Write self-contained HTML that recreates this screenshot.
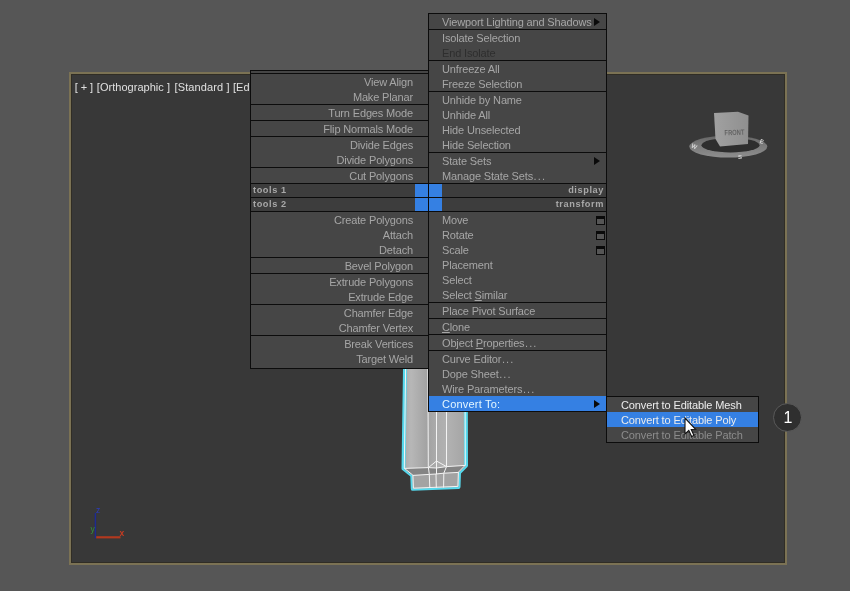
<!DOCTYPE html>
<html><head><meta charset='utf-8'><title>3ds Max quad menu</title><style>
html,body{margin:0;padding:0;}
body{width:850px;height:591px;overflow:hidden;background:#565656;position:relative;font-family:"Liberation Sans",sans-serif;font-size:11px;color:#a6a6a6;}
#vp{position:absolute;left:69px;top:72px;width:714px;height:489px;border:2px solid #7b7254;background:#383838;box-shadow:inset 0 0 0 1px #302d25;}
#vplabel{will-change:transform;position:absolute;left:0;top:0}
#vplabel span{position:absolute;top:80px;color:#e0e0e0;font-size:11px;white-space:pre;line-height:15px;}
.menu{will-change:transform;position:absolute;background:#464646;border:1px solid #0c0c0c;box-sizing:border-box;}
.row{height:15px;line-height:17px;white-space:nowrap;position:relative;letter-spacing:-0.15px}
.sep{height:1px;background:#0c0c0c;}
.hdr{height:13px;line-height:13px;background:#3d3d3d;font-weight:bold;font-size:9.2px;color:#a8a8a8;position:relative;white-space:nowrap;letter-spacing:0.6px}
#lm .row{text-align:right;padding-right:15px;}
#rm .row{padding-left:13px;}
#sm .row{padding-left:14px;color:#ececec;letter-spacing:-0.12px}
#sm .sub3{color:#8c8c8c}
.dis{color:#2e2e2e}
.hl{background:#3580e3;color:#e4f6ff}
i{font-style:normal;letter-spacing:1.1px;margin-left:0.6px}
.arr{position:absolute;right:6px;top:4px;width:0;height:0;border-left:6px solid #0a0a0a;border-top:4.5px solid transparent;border-bottom:4.5px solid transparent}
.box{position:absolute;right:1px;top:4px;width:9px;height:9px;border:1px solid #0a0a0a;border-top-width:3px;box-sizing:border-box;background:#555}
.sq{position:absolute;top:0;width:13px;height:13px;background:#3580e3}
#badge{position:absolute;left:773px;top:403px;width:27px;height:27px;border-radius:50%;background:#2f2f2f;border:1px solid #5a5a5a;color:#fff;font-size:16px;line-height:27px;text-align:center;will-change:transform;text-indent:1px}
u{text-decoration:underline;text-underline-offset:1px}
</style></head><body>
<div id="vp"></div>
<div id="vplabel"><span style="left:74.8px;letter-spacing:2.8px">[+]</span><span style="left:96.8px;letter-spacing:0.03px">[Orthographic ]</span><span style="left:174.5px;letter-spacing:0.12px">[Standard ]</span><span style="left:233px">[Ed</span></div>
<svg id="scene" width="850" height="591" viewBox="0 0 850 591" style="position:absolute;left:0;top:0">
<defs>
<linearGradient id="gbody" x1="0" x2="1" y1="0" y2="0">
<stop offset="0" stop-color="#a9a9a9"/><stop offset="0.12" stop-color="#b7b7b7"/><stop offset="0.38" stop-color="#a2a2a2"/><stop offset="0.55" stop-color="#adadad"/><stop offset="0.7" stop-color="#b2b2b2"/><stop offset="1" stop-color="#a4a4a4"/>
</linearGradient>
<linearGradient id="gcube" x1="0" x2="1" y1="0" y2="0">
<stop offset="0" stop-color="#a1a1a1"/><stop offset="1" stop-color="#8f8f8f"/>
</linearGradient>
<linearGradient id="gring" x1="0" x2="0" y1="0" y2="1"><stop offset="0" stop-color="#666666"/><stop offset="0.5" stop-color="#7c7c7c"/><stop offset="1" stop-color="#8e8e8e"/></linearGradient>
<filter id="soft" x="-10%" y="-10%" width="120%" height="120%"><feGaussianBlur stdDeviation="0.35"/></filter>
</defs>
<!-- object -->
<g stroke-linejoin="round">
<path d="M406,300 L405,369 L403.5,468.5 L412.3,475.5 L412.8,488.8 L458.5,487 L459,472.5 L466,465.5 L465.5,300 Z" fill="url(#gbody)" stroke="#56d8ec" stroke-width="4"/>
<path d="M403.8,468.5 L428.4,467.6 L436.5,468 L446.5,466.6 L466,465.5 L459,472.5 L443.8,473.2 L436,474 L429.3,474.4 L412.3,475.5 Z" fill="#848484"/>
<path d="M412.3,475.5 L412.8,488.8 L458.5,487 L459,472.5 L443.8,473.2 L429.3,474.4 Z" fill="#a3a3a3"/>
<g fill="none" stroke="#f4f4f4" stroke-width="1">
<path d="M406.6,300 L405.6,369 L404.3,468.3 L412.9,475.2 L413.4,488.2 L457.9,486.4 L458.4,472.2 L465.3,465.2 L464.8,300"/>
<path d="M427.6,300 L428.3,467.5"/>
<path d="M436.5,300 L436.5,474"/>
<path d="M446.5,300 L446.5,466.5"/>
<path d="M404.3,468.4 L428.4,467.6 L436.5,461 L446.5,466.6 L465.3,465.4"/>
<path d="M428.4,467.6 L436.5,468 L446.5,466.6"/>
<path d="M412.9,475.4 L429.3,474.4 L436,474 L443.8,473.2 L458.6,472.4"/>
<path d="M429.3,474.4 L429.8,488"/>
<path d="M436,474 L436.3,487.8"/>
<path d="M443.8,473.2 L443.6,487.5"/>
<path d="M446.5,466.6 L443.8,473.2"/>
<path d="M428.4,467.6 L429.3,474.4"/>
</g>
</g>
<!-- view cube -->
<g filter="url(#soft)">
<ellipse cx="728.3" cy="146.6" rx="39" ry="11" fill="url(#gring)"/>
<ellipse cx="730.5" cy="145.2" rx="29" ry="7.2" fill="#2d2d2d"/>
<path d="M714,113 L738,111.8 L748.5,115.5 L748,144 L720,146.6 L715.5,139 Z" fill="url(#gcube)"/>
<text x="724.5" y="135" font-family="Liberation Sans, sans-serif" font-size="7.5" font-weight="bold" fill="#646464" textLength="20" lengthAdjust="spacingAndGlyphs" transform="rotate(-2 734 132)">FRONT</text>
<text x="691" y="148.5" font-family="Liberation Sans, sans-serif" font-size="6" font-weight="bold" fill="#d8d8d8" transform="rotate(25 694 147)">W</text>
<text x="738" y="158.5" font-family="Liberation Sans, sans-serif" font-size="6" font-weight="bold" fill="#d8d8d8">S</text>
<text x="760" y="143.5" font-family="Liberation Sans, sans-serif" font-size="6" font-weight="bold" fill="#d8d8d8" transform="rotate(20 762 141)">E</text>
</g>
<!-- axis gizmo -->
<g>
<path d="M95.4,513 L95.4,538.3" stroke="#1d2a92" stroke-width="1.4" fill="none"/>
<path d="M96.2,537.3 L120.5,537.3" stroke="#b2391f" stroke-width="2.2" fill="none"/>
<text x="96" y="513" font-family="Liberation Sans, sans-serif" font-size="8.5" fill="#2b3cc0">z</text>
<text x="90.6" y="532" font-family="Liberation Sans, sans-serif" font-size="8.5" fill="#34913c">y</text>
<text x="119.5" y="536.3" font-family="Liberation Sans, sans-serif" font-size="8.5" font-weight="bold" fill="#c83c22">x</text>
</g>
</svg>

<div class="menu" id="lm" style="left:250px;top:70px;width:179px;">
<div style="height:2px"></div>
<div class="sep"></div>
<div class="row">View Align</div>
<div class="row">Make Planar</div>
<div class="sep"></div>
<div class="row">Turn Edges Mode</div>
<div class="sep"></div>
<div class="row">Flip Normals Mode</div>
<div class="sep"></div>
<div class="row">Divide Edges</div>
<div class="row">Divide Polygons</div>
<div class="sep"></div>
<div class="row">Cut Polygons</div>
<div class="sep"></div>
<div class="hdr" style="padding-left:2px">tools 1<span class="sq" style="right:0"></span></div>
<div class="sep"></div>
<div class="hdr" style="padding-left:2px">tools 2<span class="sq" style="right:0"></span></div>
<div class="sep"></div>
<div class="row">Create Polygons</div>
<div class="row">Attach</div>
<div class="row">Detach</div>
<div class="sep"></div>
<div class="row">Bevel Polygon</div>
<div class="sep"></div>
<div class="row">Extrude Polygons</div>
<div class="row">Extrude Edge</div>
<div class="sep"></div>
<div class="row">Chamfer Edge</div>
<div class="row">Chamfer Vertex</div>
<div class="sep"></div>
<div class="row">Break Vertices</div>
<div class="row">Target Weld</div>
<div style="height:2px"></div>
</div>
<div class="menu" id="rm" style="left:428px;top:13px;width:179px;">
<div class="row">Viewport Lighting and Shadows<span class="arr"></span></div>
<div class="sep"></div>
<div class="row">Isolate Selection</div>
<div class="row dis">End Isolate</div>
<div class="sep"></div>
<div class="row">Unfreeze All</div>
<div class="row">Freeze Selection</div>
<div class="sep"></div>
<div class="row">Unhide by Name</div>
<div class="row">Unhide All</div>
<div class="row">Hide Unselected</div>
<div class="row">Hide Selection</div>
<div class="sep"></div>
<div class="row">State Sets<span class="arr"></span></div>
<div class="row">Manage State Sets<i>...</i></div>
<div class="sep"></div>
<div class="hdr" style="text-align:right;padding-right:2px"><span class="sq" style="left:0"></span>display</div>
<div class="sep"></div>
<div class="hdr" style="text-align:right;padding-right:2px"><span class="sq" style="left:0"></span>transform</div>
<div class="sep"></div>
<div class="row">Move<span class="box"></span></div>
<div class="row">Rotate<span class="box"></span></div>
<div class="row">Scale<span class="box"></span></div>
<div class="row">Placement</div>
<div class="row">Select</div>
<div class="row">Select <u>S</u>imilar</div>
<div class="sep"></div>
<div class="row">Place Pivot Surface</div>
<div class="sep"></div>
<div class="row"><u>C</u>lone</div>
<div class="sep"></div>
<div class="row">Object <u>P</u>roperties<i>...</i></div>
<div class="sep"></div>
<div class="row">Curve Editor<i>...</i></div>
<div class="row">Dope Sheet<i>...</i></div>
<div class="row">Wire Parameters<i>...</i></div>
<div class="row hl"><span style="letter-spacing:0.2px">Convert To:</span><span class="arr"></span></div>
</div>
<div class="menu" id="sm" style="left:606px;top:396px;width:153px;">
<div class="row">Convert to Editable Mesh</div>
<div class="row hl">Convert to Editable Poly</div>
<div class="row sub3">Convert to Editable Patch</div>
</div>
<div id="badge">1</div>
<svg id="cursor" width="14" height="21" viewBox="0 0 14 21" style="position:absolute;left:684px;top:416.5px">
<path d="M1,1 L1,17 L4.8,13.4 L7.6,19.6 L10,18.5 L7.2,12.5 L11.6,12.3 Z" fill="#ffffff" stroke="#111111" stroke-width="1.1" stroke-linejoin="miter"/>
</svg>

</body></html>
